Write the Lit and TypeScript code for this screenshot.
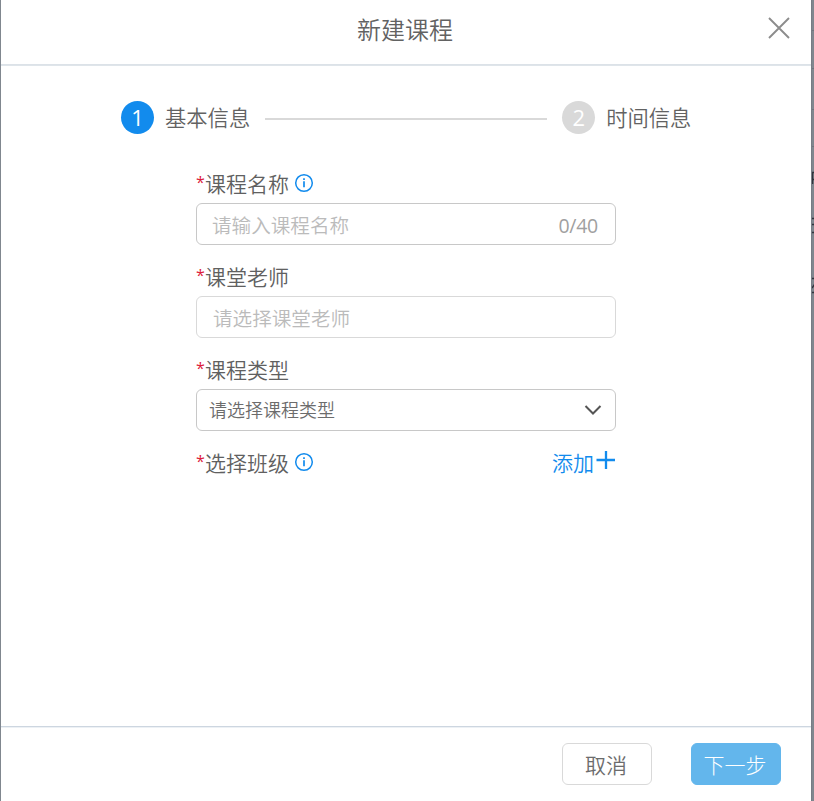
import { LitElement, html, css, svg, nothing } from "lit";
import { customElement, property } from "lit/decorators.js";
import { classMap } from "lit/directives/class-map.js";

const infoIcon = svg`<svg class="info" width="20" height="20" viewBox="0 0 20 20" fill="none" stroke="#128bed" stroke-width="1.5">
  <circle cx="10" cy="10" r="8.3" /><path d="M10 8.2V14.2M10 5.2V6.9" stroke-width="1.7" /></svg>`;

@customElement("step-item")
class StepItem extends LitElement {
  @property({ type: Number }) number = 1;
  @property() label = "";
  @property({ type: Boolean }) active = false;

  static styles = css`
    :host { display: flex; align-items: flex-start; height: 34px; }
    .dot {
      width: 33px; height: 33px; border-radius: 50%; background: #d9d9d9; color: #fff;
      font-size: 22px; font-weight: 400; line-height: 33px; text-align: center; margin-right: 11px;
    }
    .dot.active { background: #128bed; }
    .label { font-size: 21.3px; line-height: 34px; color: #626262; white-space: nowrap; }
  `;

  render() {
    return html`<div class=${classMap({ dot: true, active: this.active })}>${this.number}</div>
      <div class="label">${this.label}</div>`;
  }
}

@customElement("form-label")
class FormLabel extends LitElement {
  @property() text = "";
  @property({ type: Boolean }) info = false;

  static styles = css`
    :host { display: flex; height: 30px; align-items: center; font-size: 21px; line-height: 30px; color: #606060; }
    .star { width: 9px; margin-top: -2px; color: #dc1a3a; font-size: 16px; font-weight: 400; }
    .text { padding-top: 2px; }
    .info { margin: 0 0 0 5px; }
  `;

  render() {
    return html`<span class="star">*</span><span class="text">${this.text}</span>${this.info ? infoIcon : nothing}`;
  }
}

@customElement("app-root")
class AppRoot extends LitElement {
  static styles = css`
    :host {
      display: flex; height: 801px; box-sizing: border-box; overflow: hidden; background: #80878f;
      padding-left: 1px; font-family: "Open Sans", "Noto Sans CJK SC", sans-serif; font-weight: 350;
    }
    .dialog { width: 810px; height: 801px; background: #fff; display: flex; flex-direction: column; flex: none; }
    header {
      height: 64px; flex: none; display: grid; grid-template-columns: 60px 1fr 60px; align-items: center;
      border-bottom: 1px solid #dce2e8; box-shadow: 0 1px #dfe5ea; font-size: 24px; line-height: 36px; color: #626262; text-align: center;
    }
    .title { grid-column: 2; margin: -4px 2px 0 0; }
    .close { display: block; margin: -8px 0 0 16px; }
    main { flex: 1; padding-top: 36px; }
    .steps { display: flex; align-items: center; height: 34px; padding-left: 120px; }
    .line { width: 282px; height: 2px; background: #d9d9d9; margin: 2px 15px 0 15px; }
    form { width: 420px; margin: 33px 0 0 195px; }
    .box {
      display: flex; align-items: center; justify-content: space-between; height: 42px; box-sizing: border-box;
      border: 1px solid #c8c8c8; border-radius: 6px; margin: 5px 0 16px; padding: 3px 17px 0 15px;
      font-size: 19.6px; line-height: 30px; color: #bbb;
    }
    .teacher { border-color: #d9d9d9; padding-left: 16px; }
    .count { font-size: 19.5px; font-weight: 400; letter-spacing: -0.25px; color: #a0a0a0; }
    .select { color: #6c6c6c; font-size: 18px; padding: 0 13px 0 12px; }
    .row { display: flex; justify-content: space-between; align-items: center; height: 30px; }
    .add { display: flex; align-items: center; font-size: 21px; line-height: 30px; color: #128bed; }
    .add span { padding-top: 1px; margin-right: 1px; }
    .add svg { margin-bottom: 4px; }
    footer {
      height: 75px; flex: none; border-top: 1px solid #cdd6e0; box-shadow: inset 0 1px #edf1f5; box-sizing: border-box;
      display: flex; justify-content: flex-end; gap: 39px; padding: 16px 30px 0 0;
    }
    button {
      width: 90px; height: 42px; box-sizing: border-box; border: 1px solid #d9d9d9; border-radius: 6px; padding: 2px 2px 0 0;
      background: #fff; color: #6c6c6c; font: inherit; font-size: 21px; line-height: 30px;
    }
    .next { background: #63b6ec; border-color: #63b6ec; color: #fff; font-weight: 300; }
    .backdrop {
      width: 3px; flex: none; display: flex; flex-direction: column; background: #80878f; overflow: hidden;
      border-left: 1px solid #777c85; box-sizing: border-box;
    }
    .rule { height: 1px; background: #70757e; flex: none; }
    .r1 { margin-top: 30px; } .r2 { margin-top: 37px; } .r3 { margin-top: 40px; } .r4 { margin-top: 36px; }
    .peek { display: block; flex: none; margin-top: 6px; }
  `;

  render() {
    return html`
      <div class="dialog">
        <header>
          <div class="title">新建课程</div>
          <svg class="close" width="24" height="24" viewBox="0 0 24 24" stroke="#8c8c8c" stroke-width="1.9">
            <path d="M2 2L22 22M22 2L2 22" />
          </svg>
        </header>
        <main>
          <div class="steps">
            <step-item number="1" label="基本信息" active></step-item>
            <div class="line"></div>
            <step-item number="2" label="时间信息"></step-item>
          </div>
          <form>
            <form-label text="课程名称" info></form-label>
            <div class="box"><span>请输入课程名称</span><span class="count">0/40</span></div>
            <form-label text="课堂老师"></form-label>
            <div class="box teacher"><span>请选择课堂老师</span></div>
            <form-label text="课程类型"></form-label>
            <div class="box select">
              <span>请选择课程类型</span>
              <svg width="18" height="12" viewBox="0 0 18 12" fill="none" stroke="#555" stroke-width="2">
                <path d="M1.5 2L9 9.5L16.5 2" />
              </svg>
            </div>
            <div class="row">
              <form-label text="选择班级" info></form-label>
              <div class="add">
                <span>添加</span>
                <svg width="21" height="20" viewBox="0 0 21 20" stroke="#128bed" stroke-width="2.3">
                  <path d="M1.5 10H20M11 1V19" />
                </svg>
              </div>
            </div>
          </form>
        </main>
        <footer>
          <button>取消</button>
          <button class="next">下一步</button>
        </footer>
      </div>
      <div class="backdrop">
        <div class="rule r1"></div><div class="rule r2"></div><div class="rule r3"></div><div class="rule r4"></div>
        <svg class="peek" width="3" height="144" viewBox="0 0 3 144" fill="none" stroke="#30343d" stroke-width="1.5">
          <path d="M0 19.5H3M0 26.5H3M.5 20V31M0 65.5H3M0 71.5H3M0 79.5H3M0 125.5H3M0 139.5H3M0 135L3 131" />
        </svg>
      </div>
    `;
  }
}
